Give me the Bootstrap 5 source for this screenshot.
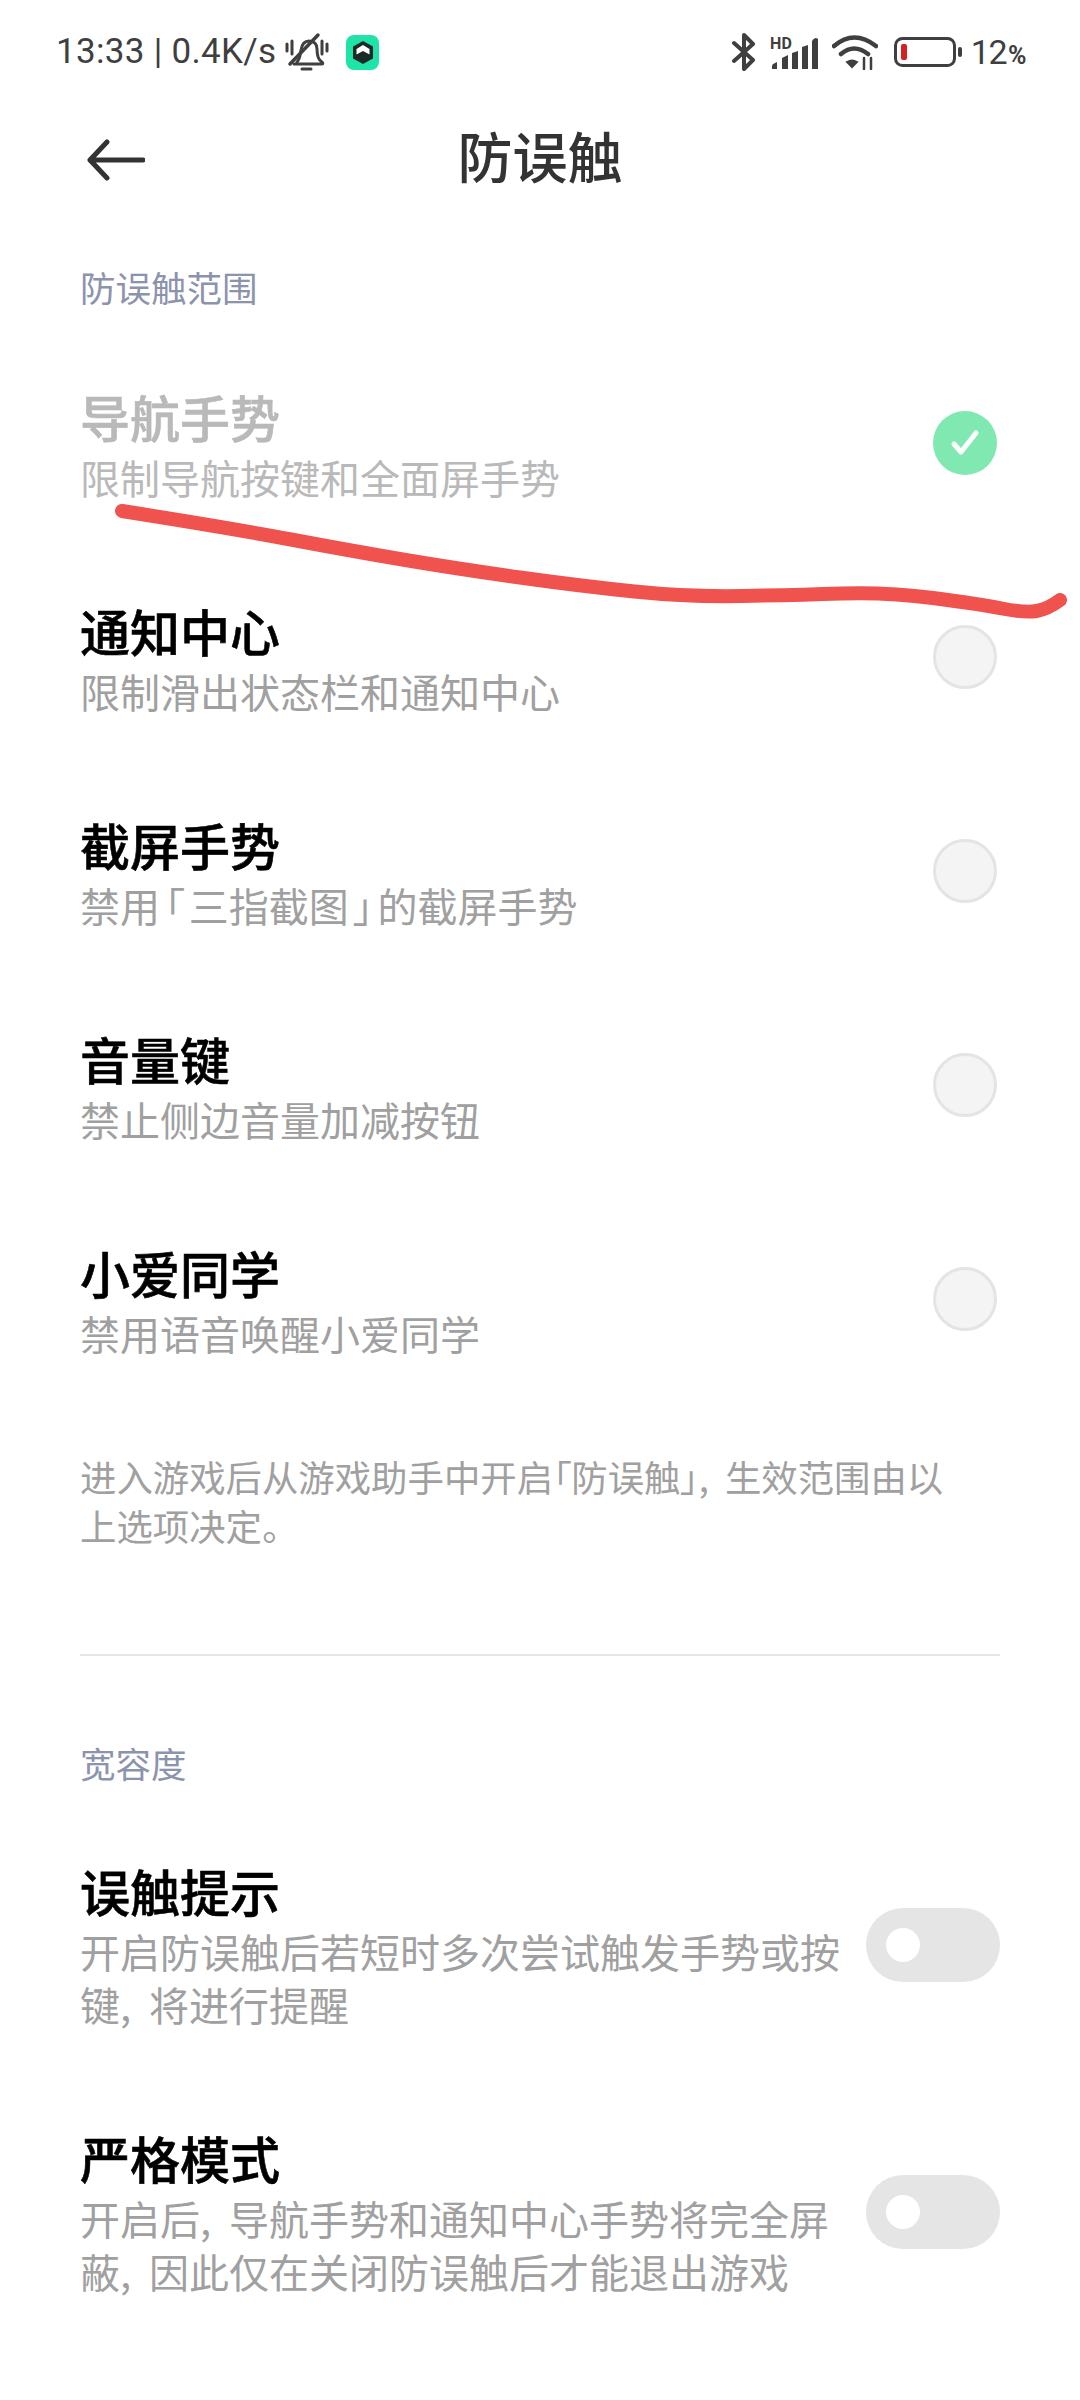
<!DOCTYPE html>
<html lang="zh-CN">
<head>
  <meta charset="UTF-8" />
  <title>防误触</title>
  <link href="https://cdn.jsdelivr.net/npm/bootstrap@5.3.0/dist/css/bootstrap.min.css" rel="stylesheet" />
  <style>
    body {
      width: 1080px;
      height: 2400px;
      overflow: hidden;
      background: #fff;
      font-family: "Noto Sans CJK SC", "Noto Sans", sans-serif;
      position: relative;
    }
    .status-line {
      height: 104px;
      padding: 0 55px 0 56px;
      font-family: Roboto, "Noto Sans", sans-serif;
      font-size: 35px;
      letter-spacing: .3px;
      color: #3f3f3f;
    }
    .status-app {
      width: 33px;
      height: 35px;
      border-radius: 8px;
      background: #1fe3a8;
    }
    .status-signal, .status-wifi {
      margin-left: 14px;
    }
    .status-cell {
      margin-left: 16px;
    }
    .status-batt {
      letter-spacing: -1.5px;
      margin-left: 9px;
      font-size: 34px;
    }
    .status-pct {
      font-size: 25px;
      font-weight: 700;
      margin-left: 2px;
    }
    .top-bar {
      height: 108px;
      position: relative;
    }
    .top-back {
      margin-left: 87px;
      margin-top: 3px;
    }
    .top-title {
      position: absolute;
      left: 0;
      right: 0;
      top: 0;
      line-height: 100px;
      text-align: center;
      font-size: 55px;
      font-weight: 500;
      color: #333;
    }
    .block-label {
      font-size: 35.5px;
      line-height: 46px;
      color: #8c93ad;
      padding-left: 80px;
    }
    .first-label {
      margin-top: 52px;
      margin-bottom: 26px;
    }
    .opt-row {
      padding: 47px 80px 47px 80px;
    }
    .opt-name {
      font-size: 50px;
      line-height: 66px;
      font-weight: 500;
      -webkit-text-stroke: .6px currentColor;
      color: #000;
      margin-bottom: 2px;
    }
    .opt-desc {
      font-size: 40px;
      line-height: 52px;
      color: #a0a0a0;
      font-feature-settings: "palt";
      word-spacing: 9px;
    }
    .opt-off .opt-name, .opt-off .opt-desc {
      color: #b9b9b9;
    }
    .quote-mark {
      margin: 0 .11em;
    }
    .pick {
      width: 64px;
      height: 64px;
      border-radius: 50%;
      background: #f4f4f4;
      border: 3px solid #e4e4e4;
      margin-right: 3px;
    }
    .pick-on {
      background: #80e9b1;
      border: 0;
    }
    .hint-text {
      font-size: 36.4px;
      line-height: 49px;
      color: #a0a0a0;
      padding: 46px 120px 0 80px;
      font-feature-settings: "palt";
      word-spacing: 8px;
    }
    .split-line {
      height: 2px;
      background: #e6e6e6;
      margin: 104px 80px 84px 80px;
    }
    .long-row {
      padding: 0 80px 0 80px;
      margin-top: 71px;
    }
    .long-row + .long-row {
      margin-top: 93px;
    }
    .long-row .opt-desc {
      line-height: 53px;
      width: 770px;
    }
    .flip {
      width: 134px;
      height: 74px;
      border-radius: 37px;
      background: #e5e5e5;
      padding-left: 20px;
      margin-top: 51px;
    }
    .flip-dot {
      width: 34px;
      height: 34px;
      border-radius: 50%;
      background: #fff;
    }
    .ink-stroke {
      position: absolute;
      left: 0;
      top: 0;
      pointer-events: none;
    }
  </style>
</head>
<body>

<div class="status-line d-flex align-items-center">
  <span>13:33 | 0.4K/s</span>
  <svg class="ms-2" width="46" height="40" viewBox="0 0 46 40" fill="none" stroke="#3f3f3f" stroke-width="3" stroke-linecap="round" stroke-linejoin="round">
    <path d="M3 12v7M8 9v13M38 9v13M43 12v7"/>
    <path d="M13 30c3-3 3-7 4-12 1-6 4-9 8-9 5 0 8 3 8 8 0 6 1 11 5 13 1 1 1 2 0 2H10"/>
    <path d="M34 3 6 32" stroke-width="3.500"/>
    <path d="M18 37h9"/>
  </svg>
  <span class="status-app ms-3 d-flex align-items-center justify-content-center">
    <svg width="22" height="25" viewBox="0 0 22 25">
      <path d="M11 1 21 6.500v12L11 24 1 18.500v-12z" fill="#1c2a27"/>
      <path d="M11 5 17.500 9v5.500L11 11 4.500 14.500V9z" fill="#fff"/>
    </svg>
  </span>
  <span class="ms-auto d-flex align-items-center">
    <svg width="24" height="40" viewBox="0 0 24 40" fill="none" stroke="#3f3f3f" stroke-width="4" stroke-linecap="round" stroke-linejoin="round">
      <path d="M2 11 21 28 12 37V3l9 9L2 29"/>
    </svg>
    <svg class="status-signal" width="48" height="34" viewBox="0 0 48 34" fill="#3f3f3f">
      <text x="0" y="14" font-family="Roboto, sans-serif" font-size="16" font-weight="700">HD</text>
      <path d="M2 34v-3q0-2 3-3l2-1v7zM12 34V23l6-3v14zM22 34V18l6-2v18zM32 34V12l6-2v24zM42 34V6q3-5 6-2v30z"/>
    </svg>
    <svg class="status-wifi" width="46" height="36" viewBox="0 0 46 36" fill="none" stroke="#3f3f3f" stroke-width="4.500" stroke-linecap="round">
      <path d="M2 12Q22-5 44 12M9 20q13-11 27 0"/>
      <path d="M15 28q5-3 10 0l-5 5z" fill="#3f3f3f" stroke-width="2"/>
      <path d="M32 24v11M39 24v11" stroke-width="2.500"/>
    </svg>
    <svg class="status-cell" width="68" height="30" viewBox="0 0 68 30" fill="none">
      <rect x="1.500" y="1.500" width="59" height="27" rx="7" stroke="#3f3f3f" stroke-width="3"/>
      <rect x="7" y="7" width="6" height="16" rx="2" fill="#d42020"/>
      <rect x="64" y="10" width="4" height="10" rx="2" fill="#3f3f3f"/>
    </svg>
    <span class="status-batt">12<span class="status-pct">%</span></span>
  </span>
</div>

<div class="top-bar d-flex align-items-center">
  <svg class="top-back" width="58" height="42" viewBox="0 0 58 42" fill="none" stroke="#333" stroke-width="5" stroke-linecap="round" stroke-linejoin="round">
    <path d="M56 21H3M20 3 3 21l17 18"/>
  </svg>
  <div class="top-title">防误触</div>
</div>

<div class="block-label first-label">防误触范围</div>

<div class="opt-row opt-off d-flex align-items-center justify-content-between">
  <div>
    <div class="opt-name">导航手势</div>
    <div class="opt-desc">限制导航按键和全面屏手势</div>
  </div>
  <div class="pick pick-on d-flex align-items-center justify-content-center">
    <svg width="32" height="30" viewBox="0 0 32 30" fill="none" stroke="#fff" stroke-width="5" stroke-linecap="round" stroke-linejoin="round">
      <path d="M5 16 12 24 27 5"/>
    </svg>
  </div>
</div>
<div class="opt-row d-flex align-items-center justify-content-between">
  <div>
    <div class="opt-name">通知中心</div>
    <div class="opt-desc">限制滑出状态栏和通知中心</div>
  </div>
  <div class="pick"></div>
</div>
<div class="opt-row d-flex align-items-center justify-content-between">
  <div>
    <div class="opt-name">截屏手势</div>
    <div class="opt-desc">禁用<span class="quote-mark">「</span>三指截图<span class="quote-mark">」</span>的截屏手势</div>
  </div>
  <div class="pick"></div>
</div>
<div class="opt-row d-flex align-items-center justify-content-between">
  <div>
    <div class="opt-name">音量键</div>
    <div class="opt-desc">禁止侧边音量加减按钮</div>
  </div>
  <div class="pick"></div>
</div>
<div class="opt-row d-flex align-items-center justify-content-between">
  <div>
    <div class="opt-name">小爱同学</div>
    <div class="opt-desc">禁用语音唤醒小爱同学</div>
  </div>
  <div class="pick"></div>
</div>

<div class="hint-text">进入游戏后从游戏助手中开启「防误触」, 生效范围由以上选项决定。</div>

<div class="split-line"></div>

<div class="block-label">宽容度</div>

<div class="long-row d-flex justify-content-between align-items-start">
  <div>
    <div class="opt-name">误触提示</div>
    <div class="opt-desc">开启防误触后若短时多次尝试触发手势或按键, 将进行提醒</div>
  </div>
  <div class="flip d-flex align-items-center"><span class="flip-dot"></span></div>
</div>
<div class="long-row d-flex justify-content-between align-items-start">
  <div>
    <div class="opt-name">严格模式</div>
    <div class="opt-desc">开启后, 导航手势和通知中心手势将完全屏蔽, 因此仅在关闭防误触后才能退出游戏</div>
  </div>
  <div class="flip d-flex align-items-center"><span class="flip-dot"></span></div>
</div>

<!-- hand drawn stroke on top of the page -->
<svg class="ink-stroke" width="1080" height="2400" viewBox="0 0 1080 2400" fill="none">
  <path d="M122 511Q230 528 291 539.500Q352 551 405.500 560Q459 569 520 577.500Q581 586 634.500 591.500Q688 597 742 596Q796 595 841.500 593.500Q887 592 933 598Q979 604 1002 608.500Q1025 613 1036.500 611Q1048 609 1060 600" stroke="#f0524e" stroke-width="14" stroke-linecap="round" stroke-linejoin="round"/>
</svg>

<script src="https://cdn.jsdelivr.net/npm/bootstrap@5.3.0/dist/js/bootstrap.bundle.min.js"></script>
</body>
</html>
